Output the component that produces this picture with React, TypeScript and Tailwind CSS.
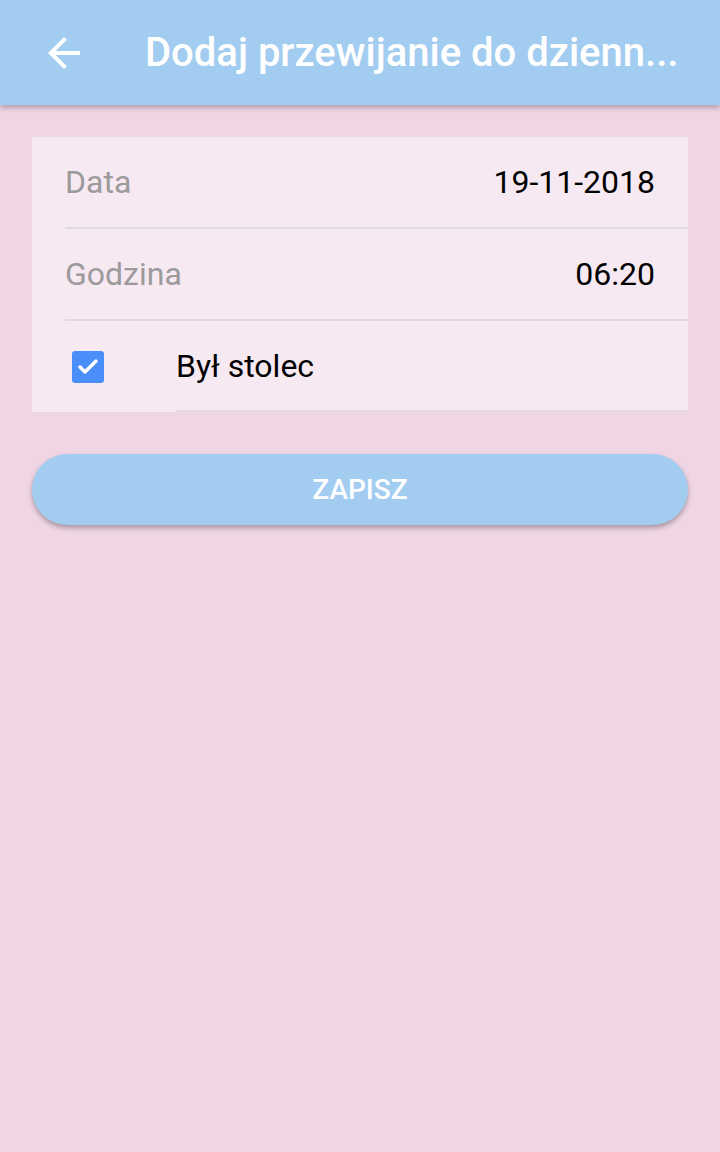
import { Check } from 'lucide-react';

interface FieldRowProps {
    label: string;
    value: string;
}

function FieldRow({ label, value }: FieldRowProps) {
    return (
        <div className="ml-[33px] flex h-[92px] items-center justify-between border-b-2 border-[#dfdadd] pr-[33px]">
            <span className="text-[32px] text-[#9c9a9b]">{label}</span>
            <span className="text-[32px] text-black">{value}</span>
        </div>
    );
}

export default function App() {
    return (
        <div
            className="min-h-[1152px] w-[720px] bg-[#f0d5e4]"
            style={{ fontFamily: 'Roboto, "Liberation Sans", sans-serif' }}
        >
            <header className="relative z-10 flex h-[105px] items-center bg-[#a2cdf1] shadow-[0_3px_5px_rgba(0,0,0,0.25)]">
                <svg viewBox="0 0 24 24" className="ml-[40px] h-12 w-12 fill-white" aria-hidden="true">
                    <path d="M20 11H7.83l5.59-5.59L12 4l-8 8 8 8 1.41-1.41L7.83 13H20v-2z" />
                </svg>
                <h1 className="ml-[57px] truncate pr-[30px] text-[40px] font-medium text-white">
                    Dodaj przewijanie do dzienn...
                </h1>
            </header>

            <main className="px-[32px] pt-[32px]">
                <div className="bg-[#f7e9f2]">
                    <FieldRow label="Data" value="19-11-2018" />
                    <FieldRow label="Godzina" value="06:20" />
                    <div className="flex h-[91px] items-center">
                        <div className="flex w-[144px] justify-start pl-[40px]">
                            <span className="flex h-[32px] w-[32px] items-center justify-center rounded-[3px] bg-[#4a8ef9]">
                                <Check className="h-6 w-6 text-white" strokeWidth={3.5} aria-hidden="true" />
                            </span>
                        </div>
                        <div className="flex h-full flex-1 items-center border-b-2 border-[#dfdadd]">
                            <span className="text-[32px] text-black">Był stolec</span>
                        </div>
                    </div>
                </div>

                <button className="mt-[42px] flex h-[71px] w-full items-center justify-center rounded-full bg-[#a2cdf1] text-[28px] font-medium text-white shadow-[0_3px_5px_rgba(0,0,0,0.3)]">
                    ZAPISZ
                </button>
            </main>
        </div>
    );
}
